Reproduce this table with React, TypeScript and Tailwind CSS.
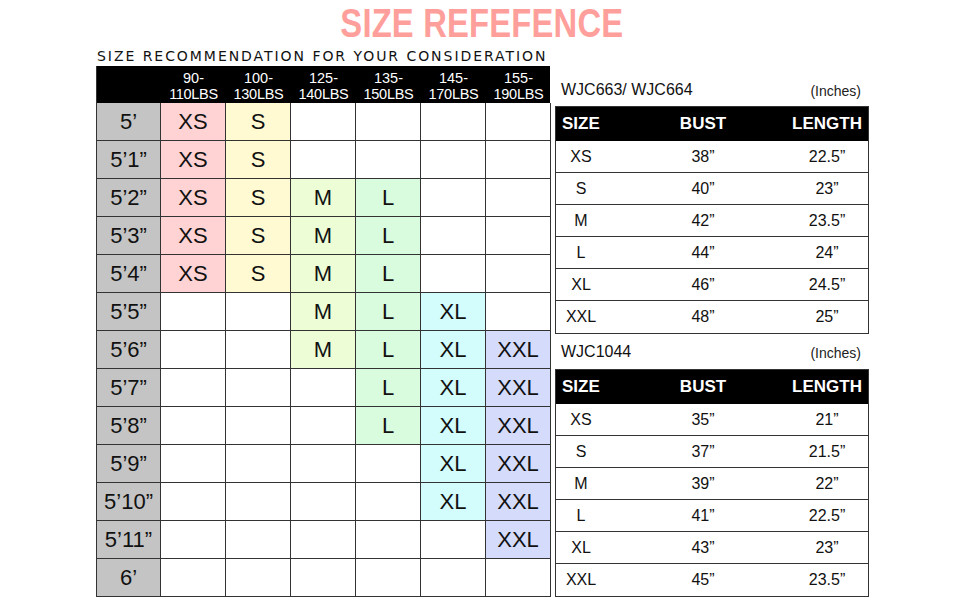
import React from "react";

const cols = ["90-|110LBS", "100-|130LBS", "125-|140LBS", "135-|150LBS", "145-|170LBS", "155-|190LBS"];

const colBg: Record<string, string> = {
  XS: "bg-[#ffd3d3]",
  S: "bg-[#fffad2]",
  M: "bg-[#edfdd6]",
  L: "bg-[#d9fbde]",
  XL: "bg-[#d3fcfc]",
  XXL: "bg-[#d4dbfb]",
};

const rows: [string, string[]][] = [
  ["5’", ["XS", "S", "", "", "", ""]],
  ["5’1”", ["XS", "S", "", "", "", ""]],
  ["5’2”", ["XS", "S", "M", "L", "", ""]],
  ["5’3”", ["XS", "S", "M", "L", "", ""]],
  ["5’4”", ["XS", "S", "M", "L", "", ""]],
  ["5’5”", ["", "", "M", "L", "XL", ""]],
  ["5’6”", ["", "", "M", "L", "XL", "XXL"]],
  ["5’7”", ["", "", "", "L", "XL", "XXL"]],
  ["5’8”", ["", "", "", "L", "XL", "XXL"]],
  ["5’9”", ["", "", "", "", "XL", "XXL"]],
  ["5’10”", ["", "", "", "", "XL", "XXL"]],
  ["5’11”", ["", "", "", "", "", "XXL"]],
  ["6’", ["", "", "", "", "", ""]],
];

const t1 = [
  ["XS", "38”", "22.5”"],
  ["S", "40”", "23”"],
  ["M", "42”", "23.5”"],
  ["L", "44”", "24”"],
  ["XL", "46”", "24.5”"],
  ["XXL", "48”", "25”"],
];
const t2 = [
  ["XS", "35”", "21”"],
  ["S", "37”", "21.5”"],
  ["M", "39”", "22”"],
  ["L", "41”", "22.5”"],
  ["XL", "43”", "23”"],
  ["XXL", "45”", "23.5”"],
];

function MeasureTable({ title, data, titleH }: { title: string; data: string[][]; titleH: string }) {
  return (
    <div className="flex flex-col">
      <div className={`${titleH} flex items-center justify-between pl-[6px] pr-[8px]`}>
        <span className="text-[16px] leading-none text-[#111]">{title}</span>
        <span className="text-[14px] leading-none text-[#222] pt-[2px]">(Inches)</span>
      </div>
      <div className="border border-[#333]">
        <div className="h-[34px] bg-black text-white font-bold text-[17px] grid grid-cols-[50px_194px_minmax(0,1fr)] items-center">
          <div className="pl-[6px]">SIZE</div>
          <div className="text-center">BUST</div>
          <div className="flex justify-end pr-[6px] whitespace-nowrap">LENGTH</div>
        </div>
        {data.map((r, i) => (
          <div
            key={i}
            className={`h-[32px] grid grid-cols-[50px_194px_minmax(0,1fr)] items-center text-[16px] text-[#111] ${i < data.length - 1 ? "border-b border-[#333]" : ""}`}
          >
            <div className="text-center">{r[0]}</div>
            <div className="text-center">{r[1]}</div>
            <div className="text-center pr-[14px] whitespace-nowrap">{r[2]}</div>
          </div>
        ))}
      </div>
    </div>
  );
}

export default function App() {
  return (
    <div
      className="w-[970px] h-[600px] bg-white overflow-hidden"
      style={{ fontFamily: '"Liberation Sans", Arial, sans-serif' }}
    >
      <div className="h-[46px] flex items-start justify-center pt-[1px]">
        <div className="text-[#ff9f9b] font-bold text-[41px] leading-[44px] scale-x-[0.8] tracking-[0.2px] whitespace-nowrap -translate-x-[3px]">
          SIZE REFEFENCE
        </div>
      </div>
      <div className="flex">
        <div className="ml-[96px] flex flex-col">
          <div
            className="h-[20px] text-[14px] leading-[20px] text-[#111] tracking-[1.95px] whitespace-nowrap pl-[1px]"
            style={{ fontFamily: '"DejaVu Sans", sans-serif' }}
          >
            SIZE RECOMMENDATION FOR YOUR CONSIDERATION
          </div>
          <div className="w-[454px] border-l border-[#333]">
            <div className="grid grid-cols-[64px_repeat(6,65px)] h-[37px] bg-black text-white">
              <div />
              {cols.map((c) => {
                const [a, b] = c.split("|");
                return (
                  <div key={c} className="flex flex-col items-center justify-end pb-[1px] text-[14.5px] leading-[16px]">
                    <span>{a}</span>
                    <span className="tracking-[-0.3px]">{b}</span>
                  </div>
                );
              })}
            </div>
            {rows.map(([h, sizes]) => (
              <div key={h} className="grid grid-cols-[64px_repeat(6,65px)] h-[38px]">
                <div className="bg-[#c4c4c4] border-r border-b border-[#333] flex items-center justify-center text-[22px] text-[#111] whitespace-nowrap">
                  {h}
                </div>
                {sizes.map((s, i) => (
                  <div
                    key={i}
                    className={`border-r border-b border-[#333] flex items-center justify-center text-[22px] text-[#111] ${s ? colBg[s] : "bg-white"}`}
                  >
                    {s}
                  </div>
                ))}
              </div>
            ))}
          </div>
        </div>
        <div className="ml-[5px] w-[314px] pt-[28px] flex flex-col">
          <MeasureTable title="WJC663/ WJC664" data={t1} titleH="h-[32px]" />
          <MeasureTable title="WJC1044" data={t2} titleH="h-[35px]" />
        </div>
      </div>
    </div>
  );
}
